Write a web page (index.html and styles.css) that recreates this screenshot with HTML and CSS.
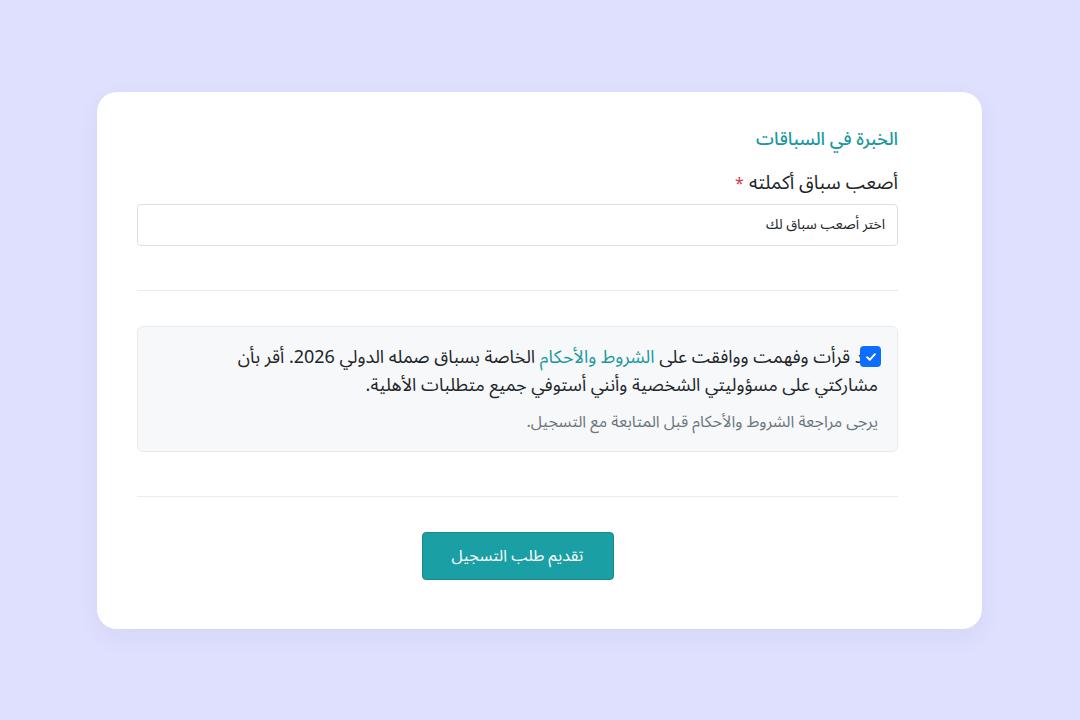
FILE: index.html
```html
<!DOCTYPE html>
<html lang="ar" dir="rtl">
<head>
<meta charset="utf-8">
<title>التسجيل</title>
<link rel="stylesheet" href="styles.css">
</head>
<body>
<main class="page">
  <section class="card">
    <h2 class="section-title">الخبرة في السباقات</h2>
    <div class="field">
      <label class="field-label">أصعب سباق أكملته <span class="req">*</span></label>
      <div class="select">اختر أصعب سباق لك</div>
    </div>
    <hr class="divider">
    <div class="terms">
      <span class="check" aria-hidden="true">
        <svg viewBox="0 0 16 16" width="14" height="14"><path d="M3.5 8.2 6.6 11.2 12.5 4.8" fill="none" stroke="#fff" stroke-width="2.2" stroke-linecap="round" stroke-linejoin="round"/></svg>
      </span>
      <p class="terms-text">لقد قرأت وفهمت ووافقت على <a class="link">الشروط والأحكام</a> الخاصة بسباق صمله الدولي 2026. أقر بأن مشاركتي على مسؤوليتي الشخصية وأنني أستوفي جميع متطلبات الأهلية.</p>
      <p class="hint">يرجى مراجعة الشروط والأحكام قبل المتابعة مع التسجيل.</p>
    </div>
    <hr class="divider">
    <div class="actions">
      <button class="submit" type="button">تقديم طلب التسجيل</button>
    </div>
  </section>
</main>
</body>
</html>
```

FILE: styles.css
```css
* { box-sizing: border-box; }
html, body { margin: 0; padding: 0; }
body {
  background: #dfdffe;
  font-family: "Noto Sans Arabic", "Noto Sans", "DejaVu Sans", sans-serif;
  color: #212529;
  width: 1080px;
  height: 720px;
}
.page {
  padding-top: 92px;
  padding-right: 1px;
  display: flex;
  justify-content: center;
}
.card {
  width: 885px;
  background: #ffffff;
  border-radius: 20px;
  padding: 30px 84px 49px 40px;
  box-shadow: 0 8px 24px rgba(60, 60, 120, 0.06);
}
.section-title {
  margin: 0;
  font-size: 18px;
  font-weight: 500;
  line-height: 34px;
  color: #1a999d;
}
.field { margin-top: 12px; }
.field-label {
  display: block;
  font-size: 19px;
  line-height: 30px;
  color: #212529;
}
.req { color: #dc3545; font-size: 16px; }
.select {
  margin-top: 5px;
  height: 42px;
  border: 1px solid #dcdfe3;
  border-radius: 4px;
  padding: 0 12px;
  font-size: 14px;
  line-height: 40px;
  color: #212529;
}
.divider {
  border: 0;
  border-top: 1px solid #e9ebee;
  margin: 44px 0 35px;
}
.terms {
  position: relative;
  background: #f7f8fa;
  border: 1px solid #e8eaee;
  border-radius: 6px;
  padding: 16px 19px 17px 40px;
}
.check {
  position: absolute;
  top: 19px;
  right: 16px;
  width: 21px;
  height: 21px;
  border-radius: 4px;
  background: #0d6efd;
  display: flex;
  align-items: center;
  justify-content: center;
}
.terms-text {
  margin: 0;
  font-size: 18px;
  line-height: 28px;
  color: #212529;
}
.link { color: #1a999d; text-decoration: none; }
.hint {
  margin: 11px 0 0;
  font-size: 16px;
  line-height: 24px;
  color: #6c757d;
}
.actions { display: flex; justify-content: center; }
.submit {
  width: 192px;
  height: 48px;
  border: 1px solid #16898d;
  border-radius: 4px;
  background: #1a9fa4;
  color: #ffffff;
  font-family: inherit;
  font-size: 16px;
}
```
